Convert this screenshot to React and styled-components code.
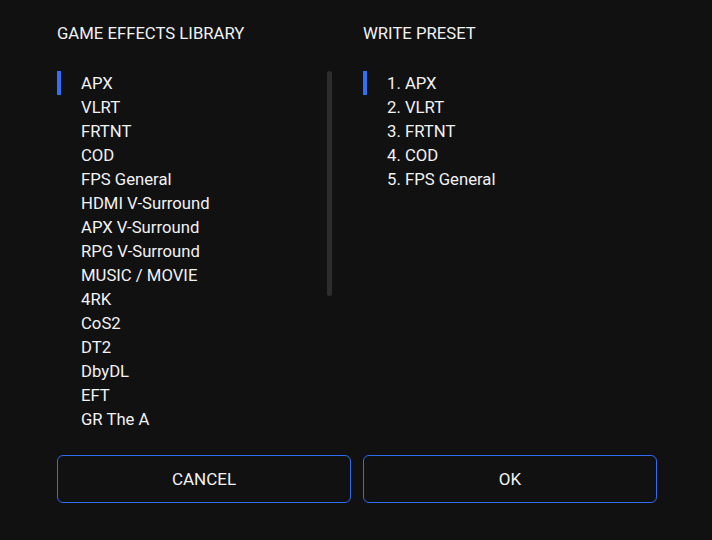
import React from 'react';
import styled, { createGlobalStyle } from "styled-components";

const GlobalStyle = createGlobalStyle`
    html, body {
        margin: 0;
        padding: 0;
        background-color: #111112;
    }
    body {
        font-family: Roboto, "Liberation Sans", sans-serif;
        color: #f2f2f2;
    }
`;

const Page = styled.div`
    width: 712px;
    height: 540px;
    box-sizing: border-box;
    padding: 22px 55px 0 57px;
    display: flex;
    flex-direction: column;
`;

const Columns = styled.div`
    display: grid;
    grid-template-columns: 294px 294px;
    column-gap: 12px;
`;

const Column = styled.div`
    display: flex;
    flex-direction: column;
`;

const Heading = styled.h2`
    margin: 0 0 25px 0;
    font-size: 16.7px;
    font-weight: 400;
    line-height: 24px;
    text-transform: uppercase;
    color: #f2f2f2;
`;

const ListWrap = styled.div`
    position: relative;
    height: 360px;
    overflow: hidden;
`;

const List = styled.ul`
    list-style: none;
    margin: 0;
    padding: 0;
`;

const Thumb = styled.div`
    position: absolute;
    left: 270px;
    top: 0;
    width: 5px;
    height: 225px;
    border-radius: 3px;
    background: #2d2d2e;
`;

const Item = styled.li`
    position: relative;
    height: 24px;
    line-height: 25px;
    padding-left: 24px;
    font-size: 16.7px;
    color: #f2f2f2;
    cursor: pointer;

    &::before {
        content: "";
        position: absolute;
        left: 0;
        top: 0;
        width: 4px;
        height: 24px;
        background: ${(p) => (p.$active ? "#3070f4" : "transparent")};
    }
`;

const Buttons = styled.div`
    margin-top: 24px;
    display: grid;
    grid-template-columns: 294px 294px;
    column-gap: 12px;
`;

const Button = styled.button`
    height: 48px;
    background: transparent;
    border: 1px solid #2f6cf0;
    border-radius: 6px;
    color: #f2f2f2;
    font-family: Roboto, "Liberation Sans", sans-serif;
    font-size: 17px;
    text-transform: uppercase;
    cursor: pointer;
`;

const library = [
    "APX", "VLRT", "FRTNT", "COD", "FPS General", "HDMI V-Surround",
    "APX V-Surround", "RPG V-Surround", "MUSIC / MOVIE", "4RK", "CoS2",
    "DT2", "DbyDL", "EFT", "GR The A",
];

const preset = ["APX", "VLRT", "FRTNT", "COD", "FPS General"];

const App = () => {
    return (
        <>
            <GlobalStyle />
            <Page>
                <Columns>
                    <Column>
                        <Heading>Game Effects Library</Heading>
                        <ListWrap>
                            <List>
                                {library.map((name, i) => (
                                    <Item key={name} $active={i === 0}>{name}</Item>
                                ))}
                            </List>
                            <Thumb />
                        </ListWrap>
                    </Column>
                    <Column>
                        <Heading>Write Preset</Heading>
                        <ListWrap>
                            <List>
                                {preset.map((name, i) => (
                                    <Item key={name} $active={i === 0}>{i + 1}. {name}</Item>
                                ))}
                            </List>
                        </ListWrap>
                    </Column>
                </Columns>
                <Buttons>
                    <Button>Cancel</Button>
                    <Button>OK</Button>
                </Buttons>
            </Page>
        </>
    );
}

export default App;
